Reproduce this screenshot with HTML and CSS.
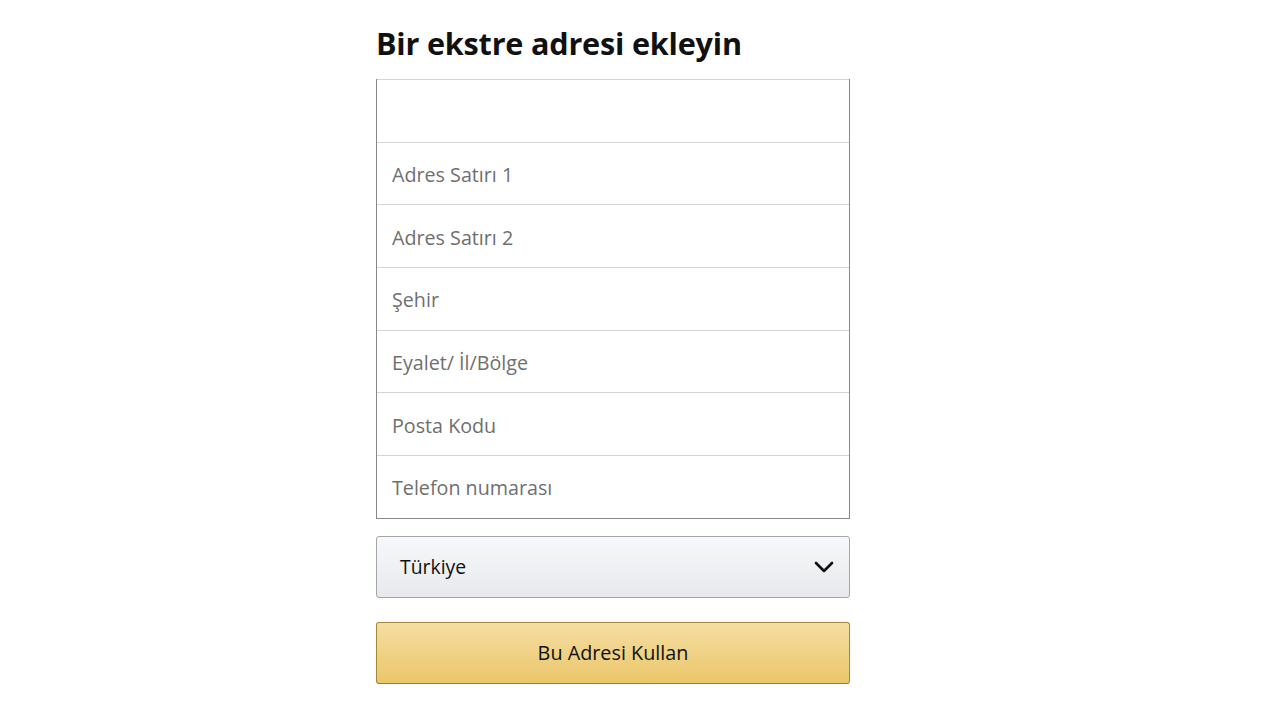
FILE: index.html
```html
<!DOCTYPE html>
<html lang="tr">
<head>
    <meta charset="UTF-8">
    <meta name="viewport" content="width=device-width, initial-scale=1.0">
    <title>Bir ekstre adresi ekleyin</title>
    <link rel="stylesheet" href="styles.css">
</head>
<body>
    <main class="page">
        <h1 class="title">Bir ekstre adresi ekleyin</h1>
        <form class="address-form" onsubmit="return false">
            <div class="fields">
                <input type="text" class="field" aria-label="Ad Soyad">
                <input type="text" class="field" placeholder="Adres Satırı 1">
                <input type="text" class="field" placeholder="Adres Satırı 2">
                <input type="text" class="field" placeholder="Şehir">
                <input type="text" class="field" placeholder="Eyalet/ İl/Bölge">
                <input type="text" class="field" placeholder="Posta Kodu">
                <input type="tel" class="field" placeholder="Telefon numarası">
            </div>
            <div class="country">
                <span class="country-name">Türkiye</span>
                <svg class="chevron" width="20" height="12" viewBox="0 0 20 12">
                    <path d="M2 2 L10 10 L18 2" fill="none" stroke="#111" stroke-width="2.6" stroke-linecap="round" stroke-linejoin="round"/>
                </svg>
            </div>
            <button type="submit" class="submit">Bu Adresi Kullan</button>
        </form>
    </main>
</body>
</html>
```

FILE: styles.css
```css
body {
    margin: 0;
    background: #fff;
    font-family: "Open Sans", "Noto Sans", sans-serif;
    color: #111;
}
.page {
    width: 474px;
    margin-left: 376px;
    padding-top: 25px;
}
.title {
    margin: 0 0 18px;
    font-size: 30.6px;
    line-height: 36px;
    font-weight: 700;
    letter-spacing: -0.2px;
}
.fields {
    display: flex;
    flex-direction: column;
    border-left: 1px solid #888;
    border-right: 1px solid #888;
    border-bottom: 1px solid #888;
}
.field {
    box-sizing: border-box;
    height: 62.7px;
    margin: 0;
    padding: 2px 15px 0;
    border: 0;
    border-top: 1px solid #d5d5d5;
    font-family: inherit;
    font-size: 19.7px;
    color: #111;
    outline: none;
}
.field::placeholder {
    color: #6f6f6f;
}
.country {
    display: flex;
    align-items: center;
    justify-content: space-between;
    box-sizing: border-box;
    height: 62px;
    margin-top: 17px;
    padding: 0 15px 0 23px;
    border: 1px solid #a2a6ac;
    border-radius: 3px;
    background: linear-gradient(#f7f8fa, #e7e9ec);
    font-size: 19.4px;
}
.submit {
    display: block;
    box-sizing: border-box;
    width: 100%;
    height: 62px;
    margin-top: 24px;
    border: 1px solid #a88734;
    border-bottom-color: #9c7e31;
    border-radius: 3px;
    background: linear-gradient(#f5dea4, #ebc66a);
    font-family: inherit;
    font-size: 19.8px;
    color: #111;
}
```
